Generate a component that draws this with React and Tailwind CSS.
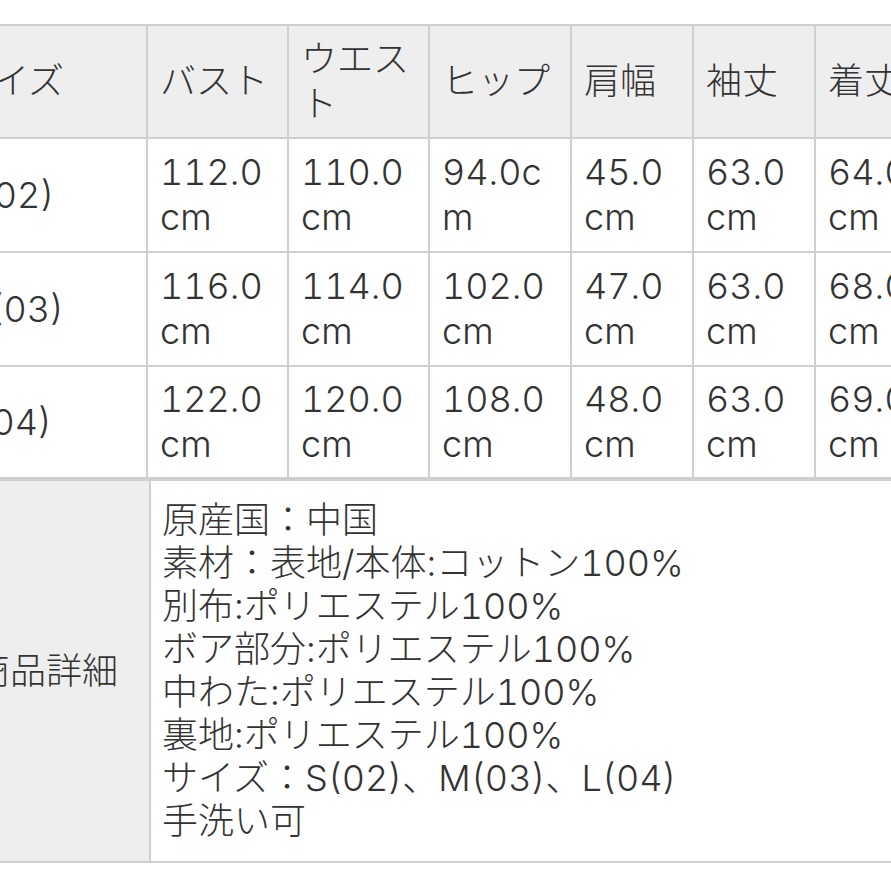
import React from 'react';

const head = [['サイズ'], ['バスト'], ['ウエス', 'ト'], ['ヒップ'], ['肩幅'], ['袖丈'], ['着丈']];

const rows = [
    [['S(02)'], ['112.0', 'cm'], ['110.0', 'cm'], ['94.0c', 'm'], ['45.0', 'cm'], ['63.0', 'cm'], ['64.0', 'cm']],
    [['M(03)'], ['116.0', 'cm'], ['114.0', 'cm'], ['102.0', 'cm'], ['47.0', 'cm'], ['63.0', 'cm'], ['68.0', 'cm']],
    [['L(04)'], ['122.0', 'cm'], ['120.0', 'cm'], ['108.0', 'cm'], ['48.0', 'cm'], ['63.0', 'cm'], ['69.0', 'cm']],
];

const details = [
    '原産国：中国',
    '素材：表地/本体:コットン100%',
    '別布:ポリエステル100%',
    'ボア部分:ポリエステル100%',
    '中わた:ポリエステル100%',
    '裏地:ポリエステル100%',
    'サイズ：S(02)、M(03)、L(04)',
    '手洗い可',
];

const font = { fontFamily: '"Inter", "Noto Sans CJK JP", sans-serif' };

const Lines = ({ lines }) => (
    <>
        {lines.map((l, i) => (
            <div key={i} className="whitespace-nowrap">{l}</div>
        ))}
    </>
);

export default function App() {
    return (
        <div className="w-[891px] h-[891px] overflow-hidden bg-white text-[#333] text-[36px] font-light tabular-nums" style={font}>
            <div className="ml-[-57px] pt-[24px]">
                <table className="border-collapse table-fixed w-[1021px]">
                    <colgroup>
                        <col className="w-[203px]" />
                        <col className="w-[141px]" />
                        <col className="w-[141px]" />
                        <col className="w-[142px]" />
                        <col className="w-[122px]" />
                        <col className="w-[122px]" />
                        <col className="w-[150px]" />
                    </colgroup>
                    <thead>
                        <tr className="h-[113px]">
                            {head.map((h, i) => (
                                <th
                                    key={i}
                                    className="border-2 border-[#cfcfcf] bg-[#eeeeee] px-[12px] py-0 text-left align-middle font-light leading-[45px]"
                                >
                                    <Lines lines={h} />
                                </th>
                            ))}
                        </tr>
                    </thead>
                    <tbody>
                        {rows.map((r, ri) => (
                            <tr key={ri} className={ri === 2 ? 'h-[112px]' : 'h-[114px]'}>
                                {r.map((c, ci) => (
                                    <td
                                        key={ci}
                                        className="border-2 border-[#cfcfcf] px-[12px] py-0 align-middle leading-[45px] overflow-hidden"
                                    >
                                        <Lines lines={c} />
                                    </td>
                                ))}
                            </tr>
                        ))}
                    </tbody>
                </table>
                <table className="border-collapse table-fixed w-[1021px]">
                    <colgroup>
                        <col className="w-[206px]" />
                        <col className="w-[815px]" />
                    </colgroup>
                    <tbody>
                        <tr className="h-[382px]">
                            <th className="border-2 border-[#cfcfcf] bg-[#eeeeee] pl-[29px] pr-[10px] text-left align-middle font-light whitespace-nowrap">
                                商品詳細
                            </th>
                            <td className="border-2 border-[#cfcfcf] px-[11px] py-[16px] align-middle leading-[43px]">
                                <Lines lines={details} />
                            </td>
                        </tr>
                    </tbody>
                </table>
            </div>
        </div>
    );
}
